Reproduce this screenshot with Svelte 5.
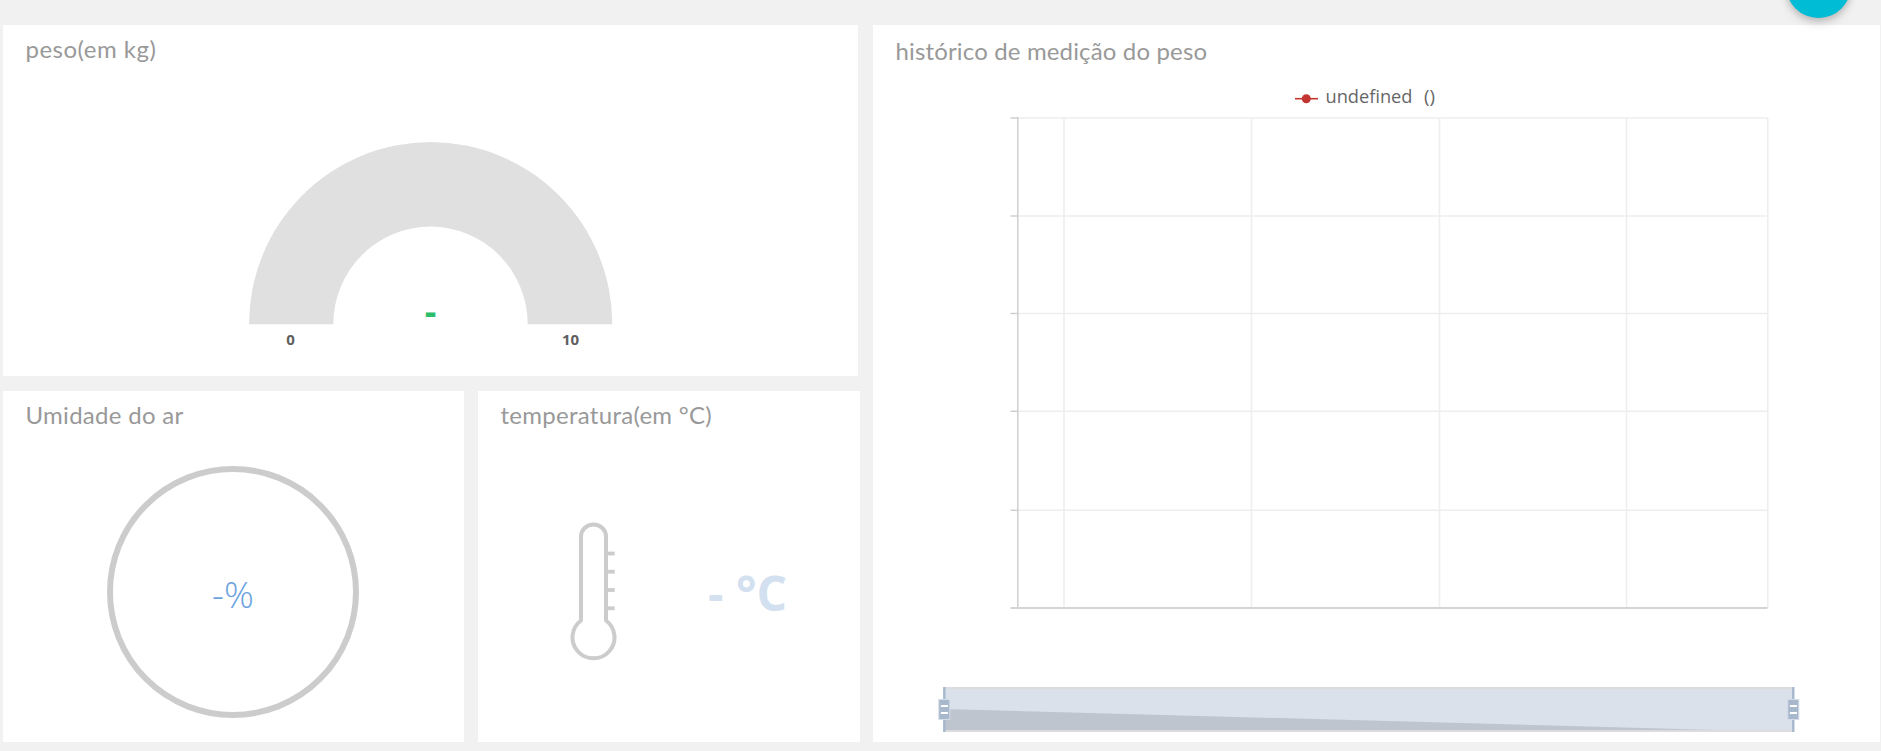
<script>
  const rows = [118, 216, 313.5, 411.3, 510.3];
  const cols = [1064, 1251.5, 1439.5, 1626.5, 1767.7];
  const ticks = rows;
  const marks = [553.5, 571.7, 590, 608.3];
</script>

<main>
  <button class="fab" aria-label="menu"></button>
  <div class="left">
    <section class="card peso">
      <h2 class="t1">peso(em kg)</h2>
      <svg class="gauge" viewBox="249 140 364 210" width="364" height="210">
        <path d="M249 324.3A181 181.6 0 0 1 612.3 324.3H527.7A97 97.5 0 0 0 333.3 324.3Z" fill="#e0e0e0" />
        <text x="430.6" y="324" class="val">-</text>
        <text x="290.6" y="345" class="lim">0</text>
        <text x="570.5" y="345" class="lim">10</text>
      </svg>
    </section>
    <div class="pair">
      <section class="card umid">
        <h2 class="t2">Umidade do ar</h2>
        <div class="ring"><span>-%</span></div>
      </section>
      <section class="card temp">
        <h2 class="t3">temperatura(em °C)</h2>
        <div class="reading">
          <svg viewBox="569 521 48 141" width="48" height="141" fill="none" stroke="#ccc" stroke-width="4">
            <path d="M581 620.5V536.5a12.5 12 0 0 1 25 0V620.5A21 21 0 1 1 581 620.5Z" stroke-linejoin="bevel" />
            {#each marks as y}<path d="M607 {y}H614.7" stroke-width="3.8" />{/each}
          </svg>
          <span>- °C</span>
        </div>
      </section>
    </div>
  </div>
  <section class="card hist">
    <h2 class="t4">histórico de medição do peso</h2>
    <svg class="chart" viewBox="873 75 1007 667" width="1007" height="667">
      <path d="M1295 98.7H1318" stroke="#c23531" stroke-width="1.6" />
      <circle cx="1306.3" cy="98.7" r="4.5" fill="#c23531" />
      <text x="1325.5" y="103" class="leg" textLength="87" lengthAdjust="spacingAndGlyphs">undefined</text>
      <text x="1424" y="103" class="leg" textLength="11" lengthAdjust="spacingAndGlyphs">()</text>
      <g stroke="#eee" stroke-width="1.6">
        {#each rows as y}<path d="M1018 {y}H1768" />{/each}
        {#each cols as x}<path d="M{x} 118V608" />{/each}
      </g>
      <g stroke="#ccc" stroke-width="1.4">
        {#each ticks as y}<path d="M1010.5 {y}H1018" />{/each}
        <path d="M1017.8 117V608" />
        <path d="M1010.5 608H1767.5" stroke="#d4d4d4" stroke-width="2" />
      </g>
      <rect x="944" y="687" width="850" height="45" fill="#dae1eb" />
      <path d="M944 709L1790 732H944Z" fill="#bec5cf" />
      <path d="M944 688H1794M944 731H1794" stroke="#dadce0" stroke-width="2" />
      {#each [944.3, 1793.3] as x}
        <g transform="translate({x} 0)">
          <path d="M0 687V732" stroke="#a7b7cc" stroke-width="2.4" />
          <rect x="-5.5" y="699.5" width="11" height="20" fill="#a7b7cc" stroke="#d3dce8" stroke-width="1" />
          <path d="M-3.4 706H3.6M-3.4 713H3.6" stroke="#fff" stroke-width="2" />
        </g>
      {/each}
    </svg>
  </section>
</main>

<style>
  :global(body) { background: #f1f1f1; overflow: hidden; }
  main { box-sizing: border-box; width: 1881px; height: 751px; padding: 25px 1px 9px 3px; display: flex; gap: 13.5px; position: relative; font-family: "Open Sans", sans-serif; }
  .left { width: 856.5px; display: flex; flex-direction: column; gap: 15px; }
  .card { background: #fff; box-sizing: border-box; height: 351px; display: flex; flex-direction: column; }
  .peso { width: 855px; }
  .pair { display: flex; gap: 14px; }
  .umid { width: 461px; }
  .temp { width: 381.5px; }
  .hist { width: 1007px; height: 717px; }
  h2 { margin: 0; padding: 8px 0 0 22.5px; height: 41px; box-sizing: border-box; font: 400 24px/32px Lato, sans-serif; color: #999; white-space: nowrap; }
  .t1 { letter-spacing: .5px; }
  .t2 { letter-spacing: .28px; }
  .t3 { letter-spacing: .28px; }
  .t4 { letter-spacing: .15px; }
  .hist h2 { padding-top: 10px; height: 50px; }
  .gauge { margin: 74px 0 0 246px; }
  .chart { display: block; }
  text { font-family: "Open Sans", sans-serif; }
  .val { font-size: 36px; font-weight: 700; fill: #2dbe6c; text-anchor: middle; }
  .lim { font-size: 15px; font-weight: 700; fill: #5e5e5e; text-anchor: middle; }
  .leg { font-size: 18.5px; fill: #666; }
  .ring { box-sizing: border-box; margin: 34px 0 0 104px; width: 252px; height: 252px; border: 6px solid #ccc; border-radius: 50%; display: flex; align-items: center; justify-content: center; color: #6aa2e0; font-size: 37px; font-weight: 300; }
  .ring span { padding-top: 2px; }
  .reading { display: flex; align-items: center; margin: 89px 0 0 91px; gap: 91px; color: #d3e0ef; font-size: 48px; font-weight: 700; line-height: 1; white-space: nowrap; }
  .reading span { padding-top: 3px; }
  .fab { position: absolute; left: 1786px; top: -47.5px; width: 65px; height: 65px; border: 0; border-radius: 50%; background: #00bcd4; box-shadow: 0 3px 6px rgba(0, 0, 0, .18), 0 7px 12px rgba(0, 0, 0, .07); }
</style>
